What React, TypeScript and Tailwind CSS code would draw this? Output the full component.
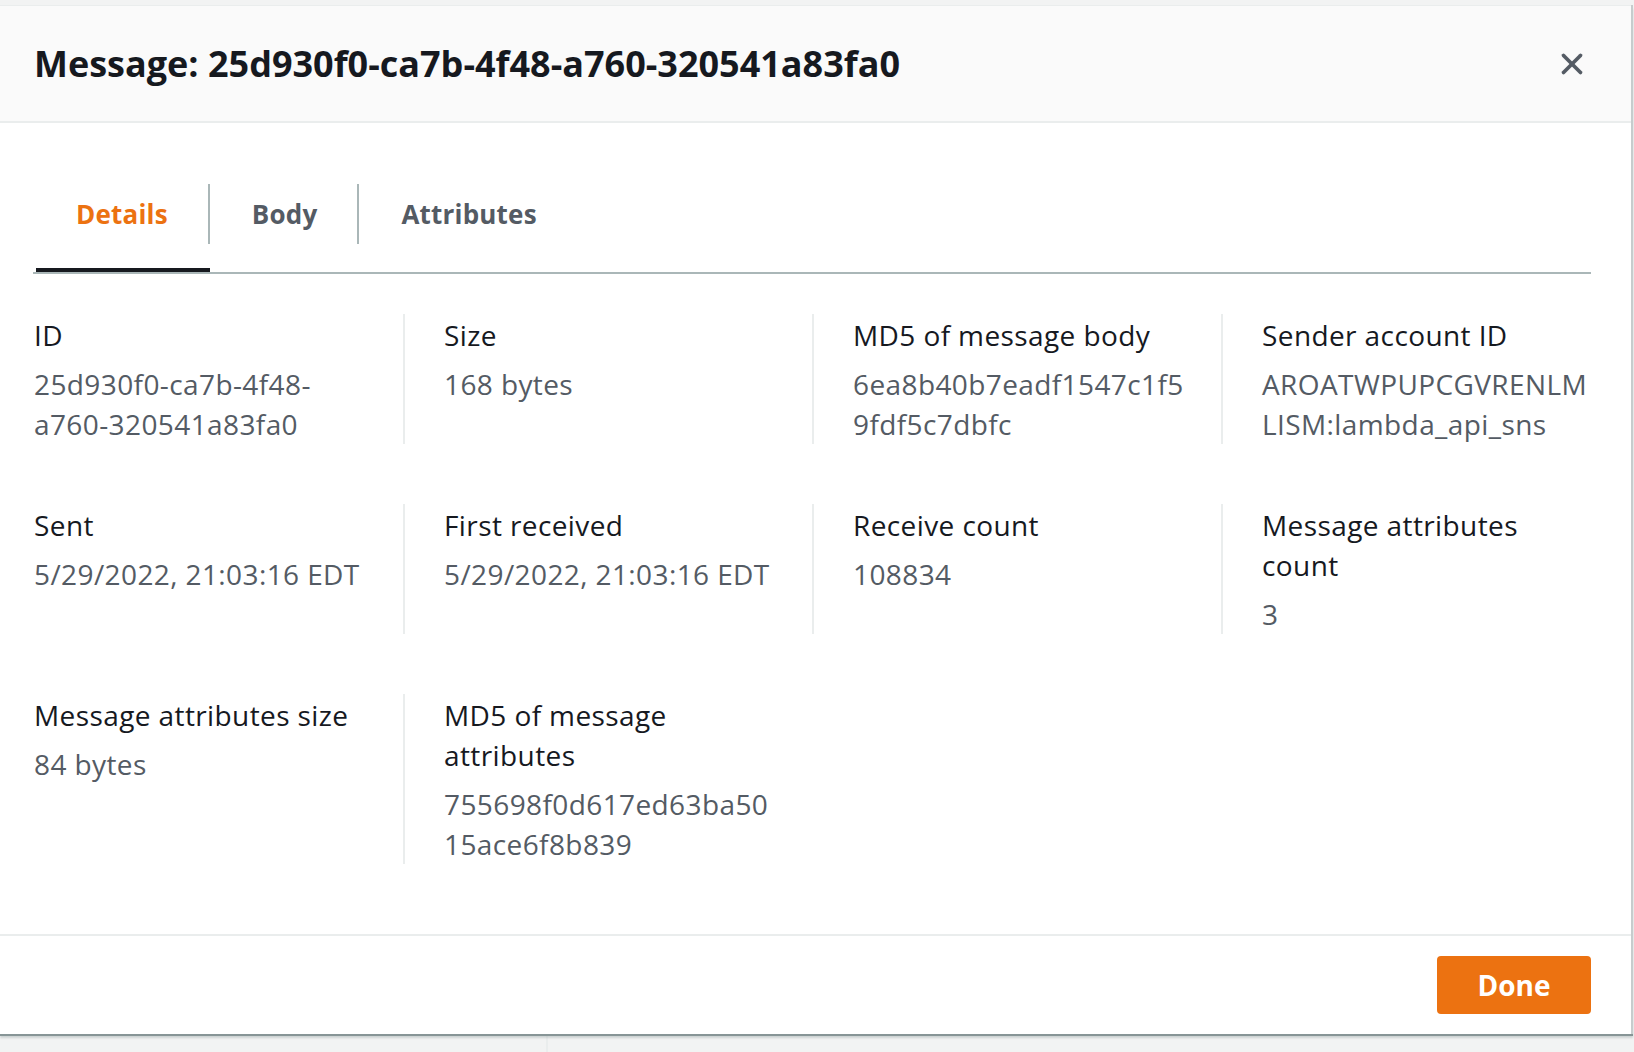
import React from 'react';
import { X } from 'lucide-react';

type Field = { label: string[]; value: string[] };

const rows: Field[][] = [
  [
    { label: ['ID'], value: ['25d930f0-ca7b-4f48-', 'a760-320541a83fa0'] },
    { label: ['Size'], value: ['168 bytes'] },
    { label: ['MD5 of message body'], value: ['6ea8b40b7eadf1547c1f5', '9fdf5c7dbfc'] },
    { label: ['Sender account ID'], value: ['AROATWPUPCGVRENLM', 'LISM:lambda_api_sns'] },
  ],
  [
    { label: ['Sent'], value: ['5/29/2022, 21:03:16 EDT'] },
    { label: ['First received'], value: ['5/29/2022, 21:03:16 EDT'] },
    { label: ['Receive count'], value: ['108834'] },
    { label: ['Message attributes', 'count'], value: ['3'] },
  ],
  [
    { label: ['Message attributes size'], value: ['84 bytes'] },
    { label: ['MD5 of message', 'attributes'], value: ['755698f0d617ed63ba50', '15ace6f8b839'] },
  ],
];

const tabs = ['Details', 'Body', 'Attributes'];

const KeyValue: React.FC<{ field: Field; first: boolean }> = ({ field, first }) => (
  <div
    className={
      first
        ? 'w-[369px] shrink-0 pr-[40px] pt-[1px]'
        : 'w-[409px] shrink-0 border-l-2 border-[#eaeded] pl-[39px] pr-[40px] pt-[1px]'
    }
  >
    <div className="text-[#16191f] leading-[40px]">
      {field.label.map((l) => (
        <div key={l} className="whitespace-nowrap">{l}</div>
      ))}
    </div>
    <div className="mt-[9px] text-[#545b64] leading-[40px]">
      {field.value.map((v) => (
        <div key={v} className="whitespace-nowrap">{v}</div>
      ))}
    </div>
  </div>
);

export default function App() {
  return (
    <div
      className="h-[1052px] w-full overflow-hidden bg-[#f2f3f3] pt-[5px] text-[28px] tracking-[0.4px]"
      style={{ fontFamily: '"Open Sans", "Liberation Sans", sans-serif' }}
    >
      <div className="relative w-[1633px] border-r-2 border-[#c6cccd] bg-white shadow-[0_2px_0_#879596,0_4px_2px_rgba(135,149,150,0.35)]">
        {/* header */}
        <div className="flex h-[118px] items-center justify-between border-t border-b-2 border-[#eaeded] bg-[#fafafa] pl-[34px] pr-[42px]">
          <h2 className="text-[36px] font-bold tracking-normal text-[#16191f]">
            Message: 25d930f0-ca7b-4f48-a760-320541a83fa0
          </h2>
          <X className="h-[34px] w-[34px] text-[#545b64]" strokeWidth={2.6} />
        </div>

        {/* body */}
        <div className="pl-[34px] pr-[40px]">
          <div className="-ml-[1px] mt-[61px] flex border-b-2 border-[#aab7b8]">
            {tabs.map((t, i) => (
              <div key={t} className="relative">
                <div
                  className={`flex h-[60px] items-center pr-[40px] text-[26px] font-bold tracking-[0.2px] ${
                    i === 0 ? 'pl-[43px]' : 'pl-[42px]'
                  } ${i < tabs.length - 1 ? 'border-r-2 border-[#aab7b8]' : ''} ${
                    i === 0 ? 'text-[#ec7211]' : 'text-[#545b64]'
                  }`}
                >
                  {t}
                </div>
                <div className="h-[28px]" />
                {i === 0 && <div className="absolute bottom-0 left-[3px] right-0 h-[4px] bg-[#16191f]" />}
              </div>
            ))}
          </div>

          <div className="mt-[40px] flex flex-col gap-[60px] pb-[70px]">
            {rows.map((row, ri) => (
              <div key={ri} className="flex">
                {row.map((f, fi) => (
                  <KeyValue key={fi} field={f} first={fi === 0} />
                ))}
              </div>
            ))}
          </div>
        </div>

        {/* footer */}
        <div className="flex h-[100px] items-center justify-end border-t-2 border-[#eaeded] pr-[40px]">
          <button className="h-[58px] w-[154px] rounded-[4px] bg-[#ec7211] font-bold tracking-normal text-white">
            Done
          </button>
        </div>
      </div>
      <div className="ml-[546px] h-[20px] w-[2px] bg-[#eaeded]" />
    </div>
  );
}
